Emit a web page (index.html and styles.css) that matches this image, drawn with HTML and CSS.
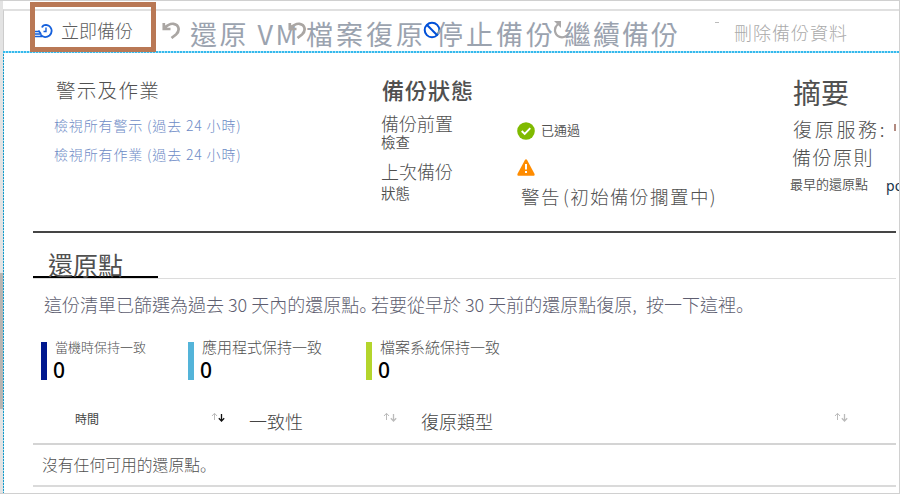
FILE: index.html
```html
<!DOCTYPE html>
<html lang="zh-Hant">
<head>
<meta charset="utf-8">
<title>備份</title>
<link rel="stylesheet" href="styles.css">
</head>
<body>
<svg class="defs" width="0" height="0">
  <symbol id="undo" viewBox="0 0 18 18"><path d="M1.800 2v6h6.700M2.500 7C5 4.500 8 2.300 11.500 2.800C17.500 3.700 18 10 14 13.500L9.500 17" fill="none" stroke="currentColor" stroke-width="2.700"/></symbol>
  <symbol id="sort-up" viewBox="0 0 7 10"><path d="M3.500 8V1.500M1 4l2.500-2.700L6 4" fill="none" stroke="currentColor"/></symbol>
  <symbol id="sort-down" viewBox="0 0 7 10"><path d="M3.500 2v7M.8 6.300l2.700 2.700l2.700-2.700" fill="none" stroke="currentColor" stroke-width="1.300"/></symbol>
</svg>
<div class="window">
  <div class="rail"><div class="thumb"></div></div>
  <div class="blade">
    <header class="toolbar">
      <div class="command now">
        <svg class="history" viewBox="0 0 18 16"><g fill="none" stroke="#1560dc"><path d="M0 8.500h4M0 11h5.500M0 13.500h7" stroke-width="1.300"/><path d="M3.500 7.500l2.500 3.500M5.500 11.500C8 15 12 14.500 14.500 12.500C18.500 8.500 16.500 2.500 11 1.800C9 1.800 7.500 3 7 4.500" stroke-width="1.800"/><path d="M11 4.500v4H8.500" stroke-width="1.400"/></g></svg>
        <span>立即備份</span>
      </div>
      <div class="command large restore"><svg class="icon"><use href="#undo"/></svg><span>還原 VM</span></div>
      <div class="command large files"><svg class="icon"><use href="#undo"/></svg><span>檔案復原</span></div>
      <div class="command large stop"><svg class="icon" viewBox="0 0 18 18"><circle cx="9" cy="9" r="7.300" fill="none" stroke="#0050d8" stroke-width="2"/><path d="M3.800 3.800l10.400 10.400" stroke="#0050d8" stroke-width="2"/></svg><span>停止備份</span></div>
      <div class="command large resume"><svg class="icon" viewBox="0 0 18 18"><path d="M5 3C-.5 8 2 16 9 16.300C12 16.300 14 15 16 12" fill="none" stroke="#aaa8a8" stroke-width="2.200"/><path d="M1 0h7v7z" fill="#aaa8a8"/></svg><span>繼續備份</span></div>
      <i class="mark"></i>
      <div class="command delete"><span>刪除備份資料</span></div>
    </header>
    <main class="content">
      <section class="essentials">
        <div class="alerts">
          <h2>警示及作業</h2>
          <a>檢視所有警示 (過去 24 小時)</a>
          <a>檢視所有作業 (過去 24 小時)</a>
        </div>
        <div class="status">
          <h2>備份狀態</h2>
          <div class="pair">
            <div class="term">備份前置<small>檢查</small></div>
            <div class="passed"><svg viewBox="0 0 18 18"><circle cx="9" cy="9" r="8.800" fill="#7fba00"/><path d="M4.700 9l3 3l5.600-5.800" fill="none" stroke="#fff" stroke-width="1.900"/></svg><span>已通過</span></div>
          </div>
          <div class="pair last">
            <div class="term">上次備份<small>狀態</small></div>
            <div class="warning"><svg viewBox="0 0 18 17"><path d="M9 .3Q9.700.3 10.200 1.200L17.600 15Q18 16.700 16.800 16.700H1.200Q0 16.700.4 15L7.800 1.200Q8.300.3 9 .3z" fill="#ff8c00"/><path d="M9 5v5.500M9 12v2" stroke="#fff" stroke-width="2"/></svg><span>警告 (初始備份擱置中)</span></div>
          </div>
        </div>
        <div class="summary">
          <h2>摘要</h2>
          <div class="vault"><span>復原服務:</span><i></i></div>
          <div class="policy">備份原則</div>
          <div class="oldest"><span>最早的還原點</span><b>po</b></div>
        </div>
      </section>
      <section class="points">
        <div class="tabs"><h2>還原點</h2></div>
        <p class="hint"><span class="filter">這份清單已篩選為過去 30 天內的還原點<q lang="ja">。</q></span><span class="advice">若要從早於 30 天前的還原點復原,</span><span>按一下這裡<q lang="ja">。</q></span></p>
        <div class="stats">
          <div class="stat crash"><span>當機時保持一致</span><b>0</b></div>
          <div class="stat app"><span>應用程式保持一致</span><b>0</b></div>
          <div class="stat fs"><span>檔案系統保持一致</span><b>0</b></div>
        </div>
        <div class="head">
          <div class="time"><span>時間</span></div>
          <div class="sort active"><svg><use href="#sort-up"/></svg><svg><use href="#sort-down"/></svg></div>
          <div class="consistency">一致性</div>
          <div class="sort"><svg><use href="#sort-up"/></svg><svg><use href="#sort-down"/></svg></div>
          <div class="type">復原類型</div>
          <div class="sort"><svg><use href="#sort-up"/></svg><svg><use href="#sort-down"/></svg></div>
        </div>
        <div class="empty">沒有任何可用的還原點<q lang="ja">。</q></div>
      </section>
    </main>
  </div>
  <div class="highlight"></div>
</div>
</body>
</html>
```
FILE: styles.css
```css
* { box-sizing: border-box; }
body {
  margin: 0;
  font-family: "Noto Sans CJK TC", "Noto Sans", sans-serif;
  font-weight: 300;
  color: #505050;
  background: #fff;
  overflow: hidden;
}
h2, p { margin: 0; font-weight: 300; }
b { font-weight: 400; }
q { quotes: none; font-family: "Noto Sans CJK JP", sans-serif; }
q::before, q::after { content: none; }
svg, span, a { display: block; flex: none; }
.defs { position: absolute; }
.window {
  position: relative;
  display: flex;
  width: 900px;
  height: 494px;
  border: 1px solid #d0d0d0;
  border-left: 0;
  white-space: nowrap;
  overflow: hidden;
}
.rail { flex: none; width: 3px; padding-top: 272px; background: #e3e3e3; }
.thumb { height: 136px; background: #b8b5b2; }
.blade { flex: none; width: 896px; padding-top: 8px; }
.toolbar {
  display: flex;
  height: 42px;
  border-top: 2px solid #e0e0e0;
  border-left: 1px solid #ccc;
}
.command { display: flex; height: 40px; flex: none; }
.now { width: 127px; padding-left: 31px; font-size: 18px; line-height: 38px; color: #5c5c5c; }
.history { width: 18px; height: 16px; margin-top: 12px; margin-right: 8px; }
.large { font-size: 27px; line-height: 46px; color: #9ba3af; letter-spacing: 3px; font-weight: 400; }
.icon { width: 18px; height: 18px; margin-top: 10px; color: #aaa6a3; }
.restore { width: 126px; margin-left: 31px; }
.restore .icon { margin-right: 10px; }
.restore span { letter-spacing: 2.500px; }
.files { width: 135px; }
.files .icon { margin-right: 0; }
.stop { width: 130px; }
.stop .icon { margin-right: -5px; }
.resume { width: 162px; letter-spacing: 2px; }
.resume .icon { margin-right: -7px; }
.mark { flex: none; width: 4px; height: 1px; margin-top: 11px; background: #bbb; }
.delete { margin-left: 15px; font-size: 18px; line-height: 42px; letter-spacing: 1px; color: #aaa; }
.content {
  height: 442px;
  padding: 2px 0 0 1px;
  background:
    repeating-linear-gradient(90deg, #35b9ec 0 2px, #a9e2f8 2px 3px) 0 0 / 100% 2px no-repeat,
    repeating-linear-gradient(#189bca 0 2px, #b5dfed 2px 3px) 0 0 / 1px 100% no-repeat;
}
.essentials {
  display: grid;
  grid-template-columns: 349px 407px 107px;
  width: 863px;
  height: 180px;
  margin-left: 29px;
  border-bottom: 2px solid #454545;
}
.alerts { padding: 23px 0 0 21px; }
.alerts h2 { margin-left: 2px; font-size: 19.500px; letter-spacing: 1.300px; line-height: 28px; }
.alerts a { font-size: 14px; letter-spacing: .85px; line-height: 29px; color: #6d8bc6; }
.alerts h2 + a { margin-top: 7px; }
.status { padding-top: 22px; }
.status h2 { font-size: 22px; letter-spacing: 1px; line-height: 28px; font-weight: 500; }
.pair { display: grid; grid-template-columns: 135px 1fr; height: 49px; margin-top: 8px; }
.term { margin-left: -1px; font-size: 18px; line-height: 24px; }
.term small { display: block; font-size: 14.500px; line-height: 13px; font-weight: 350; }
.passed { display: flex; gap: 6px; padding-top: 11px; font-size: 13px; line-height: 16px; font-weight: 350; }
.passed svg { width: 18px; height: 18px; }
.last { margin-top: -1px; }
.last small { margin-top: 3px; }
.warning svg { width: 18px; height: 17px; }
.warning span { margin-left: 4px; font-size: 18.500px; letter-spacing: 1.450px; word-spacing: -3.500px; line-height: 28px; margin-top: 6px; }
.summary { padding-top: 24px; }
.summary h2 { margin-left: 4px; font-size: 28px; line-height: 30px; font-weight: 400; }
.vault { display: flex; justify-content: space-between; margin: 6px 0 0 4px; font-size: 19px; letter-spacing: 2.700px; line-height: 31px; }
.vault i { width: 2px; height: 7px; margin: 11px 0; background: #b28a80; }
.policy { margin-left: 3px; font-size: 19px; letter-spacing: 1.500px; line-height: 26px; }
.oldest { display: flex; margin-left: 1px; font-size: 13px; line-height: 27px; font-weight: 350; }
.oldest b { margin-left: 18px; font-family: "Noto Sans", sans-serif; font-size: 14px; line-height: 31px; color: #16324a; }
.points { margin-left: 29px; width: 863px; }
.tabs { height: 46px; border-bottom: 1px solid #dcdcdc; }
.tabs h2 { width: 125px; height: 45px; padding: 13px 0 0 15px; font-size: 25px; line-height: 36px; border-bottom: 2px solid #000; font-weight: 400; }
.hint { display: flex; margin-left: 11px; padding-top: 10px; font-size: 18px; line-height: 30px; color: #5e5e70; }
.filter { width: 327px; }
.advice { width: 275px; }
.stats { display: flex; margin: 23px 0 0 8px; height: 38px; }
.stat { width: 178px; height: 38px; border-left: 6px solid #00188f; padding-left: 8px; font-size: 15px; line-height: 10px; }
.stat b { display: block; margin-left: -2px; font-family: "Noto Sans", sans-serif; font-weight: 500; font-size: 21px; line-height: 29px; margin-top: 4px; color: #000; }
.crash { width: 147px; font-size: 13px; }
.app { border-color: #54b4d9; }
.fs { border-color: #b4d52c; }
.head { display: flex; height: 65px; padding: 28px 0 0 42px; border-bottom: 2px solid #d4d4d4; font-size: 18px; line-height: 27px; color: #444; }
.time { width: 136px; font-size: 12px; line-height: 22px; font-weight: 400; }
.sort { display: flex; width: 38px; padding-top: 4px; color: #bbb; }
.sort svg { width: 7px; height: 10px; }
.sort.active svg + svg { color: #111; }
.consistency { width: 134px; }
.type { width: 413px; }
.empty { height: 42px; padding-left: 9px; font-size: 15.800px; line-height: 39px; border-bottom: 2px solid #dadada; }
.highlight { position: absolute; left: 30px; top: 1px; width: 126px; height: 50px; border: 5px solid #b97855; }
```
